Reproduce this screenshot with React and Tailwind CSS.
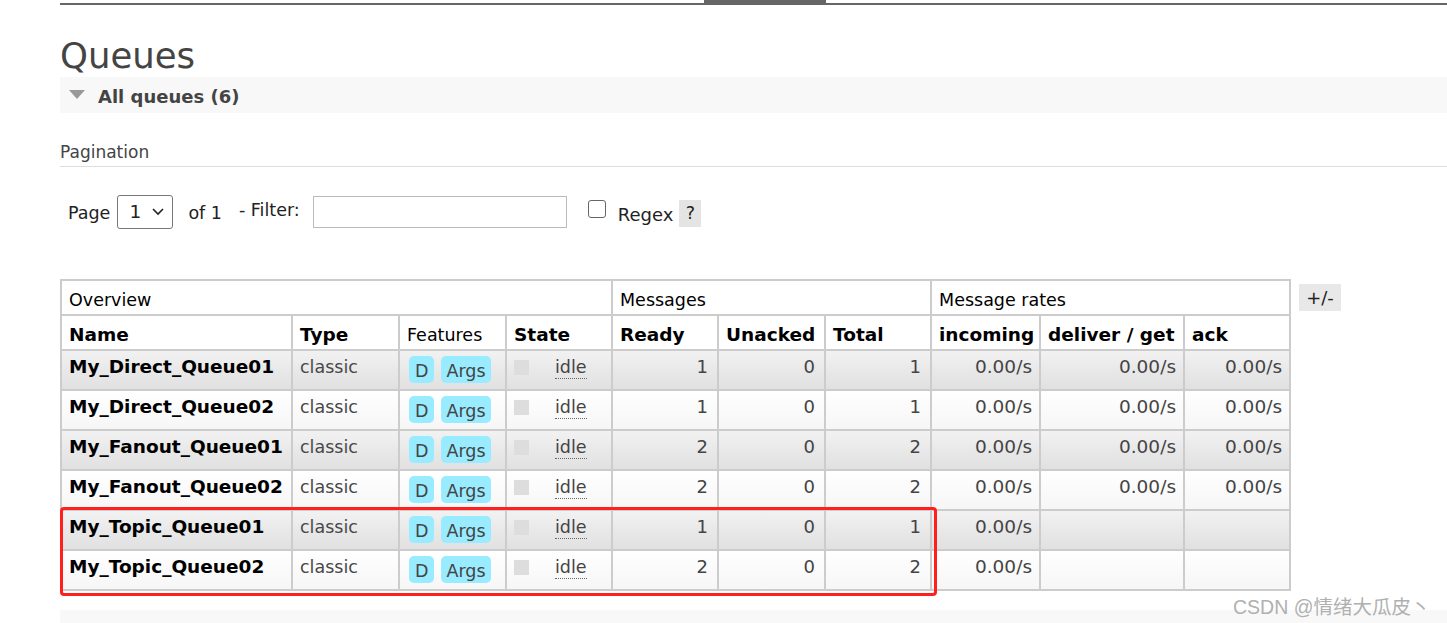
const queues = [
  { name: 'My_Direct_Queue01', ready: 1, unacked: 0, total: 1, rates: ['0.00/s', '0.00/s', '0.00/s'] },
  { name: 'My_Direct_Queue02', ready: 1, unacked: 0, total: 1, rates: ['0.00/s', '0.00/s', '0.00/s'] },
  { name: 'My_Fanout_Queue01', ready: 2, unacked: 0, total: 2, rates: ['0.00/s', '0.00/s', '0.00/s'] },
  { name: 'My_Fanout_Queue02', ready: 2, unacked: 0, total: 2, rates: ['0.00/s', '0.00/s', '0.00/s'] },
  { name: 'My_Topic_Queue01', ready: 1, unacked: 0, total: 1, rates: ['0.00/s', '', ''] },
  { name: 'My_Topic_Queue02', ready: 2, unacked: 0, total: 2, rates: ['0.00/s', '', ''] },
];

const td = 'border-2 border-[#ccc] px-[7px] align-top pt-[5px] h-[40px] whitespace-nowrap';
const thBase = 'border-2 border-[#ccc] px-[7px] text-left h-[35px] pt-[4px] text-black whitespace-nowrap';
const th = `${thBase} font-normal`;
const thBold = `${thBase} font-bold text-[18.5px]`;
const num = `${td} text-right pr-[9px] text-[#444] text-[18px]`;

function QueueRow({ q, index }) {
  const rowBg =
    index % 2 === 0
      ? 'bg-gradient-to-b from-[#f2f2f2] to-[#e0e0e0]'
      : 'bg-gradient-to-b from-white to-[#f6f6f6]';
  return (
    <tr className={rowBg}>
      <td className={`${td} font-bold text-black text-[18.5px]`}>{q.name}</td>
      <td className={`${td} text-[#484848]`}>classic</td>
      <td className={`${td} pl-[9px]`}>
        <div className="flex gap-[7px]">
          <span className="rounded-[5px] bg-[#99ebff] px-[6px] h-[27px] leading-[30px] text-[#444]">D</span>
          <span className="rounded-[5px] bg-[#99ebff] px-[5px] h-[27px] leading-[30px] text-[#444]">Args</span>
        </div>
      </td>
      <td className={td}>
        <div className="flex">
          <span className="mt-[4px] h-[15px] w-[15px] bg-[#ddd]" />
          <span className="ml-[26px] border-b border-dotted border-[#666] leading-[22px] text-[#444]">idle</span>
        </div>
      </td>
      <td className={num}>{q.ready}</td>
      <td className={num}>{q.unacked}</td>
      <td className={num}>{q.total}</td>
      {q.rates.map((r, i) => (
        <td key={i} className={`${td} text-right pr-[7px] text-[#444] text-[18.5px]`}>{r}</td>
      ))}
    </tr>
  );
}

export default function App() {
  return (
    <div
      className="relative h-[623px] w-[1447px] overflow-hidden bg-white text-[17.5px] text-[#444]"
      style={{ fontFamily: '"DejaVu Sans", Verdana, sans-serif' }}
    >
      {/* top nav line */}
      <div className="ml-[60px] flex h-[5px] items-start">
        <div className="relative mt-[3px] h-[2px] w-full bg-[#666]">
          <div className="absolute left-[644px] top-[-3px] h-[3px] w-[122px] bg-[#666]" />
        </div>
      </div>

      <div className="pl-[60px]">
        <h1 className="mt-[30px] h-[42px] text-[35.5px] leading-[42px] text-[#444]">Queues</h1>
        <div className="flex h-[36px] items-center bg-[#f8f8f8] pt-[3px]">
          <svg width="16" height="10" viewBox="0 0 16 10" className="ml-[9px] -mt-[3px]">
            <polygon points="0,0 16,0 8,9" fill="#999" />
          </svg>
          <span className="ml-[13px] text-[18px] font-bold text-[#444]">All queues (6)</span>
        </div>

        <div className="mt-[28px] border-b border-[#ddd] pb-[3px] text-[17px] leading-[22px] text-[#444]">
          Pagination
        </div>

        <div className="mt-[28px] flex items-center pl-[8px] text-[17.5px] text-[#222]">
          <span className="mt-[3px]">Page</span>
          <div className="ml-[7px] flex h-[34px] w-[56px] items-center rounded-[3px] border border-[#777] pl-[11px] text-[18.5px]">
            1
            <svg width="12" height="8" viewBox="0 0 12 8" className="ml-[11px]">
              <polyline points="1,1 6,6 11,1" fill="none" stroke="#222" strokeWidth="1.6" />
            </svg>
          </div>
          <span className="ml-[15px] mt-[2px]">of 1</span>
          <span className="ml-[17px] -mt-[4px]">- Filter:</span>
          <div className="ml-[13px] h-[32px] w-[254px] border border-[#bbb]" />
          <div className="ml-[21px] -mt-[6px] h-[18px] w-[18px] rounded-[3px] border border-[#666]" />
          <span className="ml-[12px] mt-[4px] text-[18px]">Regex</span>
          <span className="ml-[6px] mt-[3px] flex h-[27px] w-[22px] items-center justify-center bg-[#e4e4e4]">?</span>
        </div>

        <div className="mt-[50px] flex items-start">
          <div className="relative">
            <table className="w-[1231px] table-fixed border-collapse border-2 border-[#ccc] leading-[22px]">
              <colgroup>
                <col className="w-[231px]" />
                <col className="w-[107px]" />
                <col className="w-[107px]" />
                <col className="w-[106px]" />
                <col className="w-[106px]" />
                <col className="w-[107px]" />
                <col className="w-[106px]" />
                <col className="w-[109px]" />
                <col className="w-[144px]" />
                <col className="w-[106px]" />
              </colgroup>
              <thead>
                <tr>
                  <th colSpan={4} className={th}>Overview</th>
                  <th colSpan={3} className={th}>Messages</th>
                  <th colSpan={3} className={th}>Message rates</th>
                </tr>
                <tr>
                  <th className={thBold}>Name</th>
                  <th className={thBold}>Type</th>
                  <th className={th}>Features</th>
                  <th className={thBold}>State</th>
                  <th className={thBold}>Ready</th>
                  <th className={thBold}>Unacked</th>
                  <th className={thBold}>Total</th>
                  <th className={thBold}>incoming</th>
                  <th className={thBold}>deliver / get</th>
                  <th className={thBold}>ack</th>
                </tr>
              </thead>
              <tbody>
                {queues.map((q, i) => (
                  <QueueRow key={q.name} q={q} index={i} />
                ))}
              </tbody>
            </table>
            {/* highlight box */}
            <div className="pointer-events-none absolute left-0 top-[228px] h-[89px] w-[877px] rounded-[4px] border-[3px] border-[#ff1f1f]" />
          </div>
          <div className="ml-[8px] mt-[5px] flex h-[27px] w-[42px] items-center justify-center bg-[#e8e8e8] text-[18px] text-[#222]">
            +/-
          </div>
        </div>

        <div className="mt-[19px] h-[20px] bg-[#f8f8f8]" />
      </div>

      <div
        className="absolute left-[1233px] top-[593px] text-[19.5px] text-[#b0b0b0]"
        style={{ fontFamily: '"Liberation Sans", "Noto Sans CJK SC", sans-serif' }}
      >
        CSDN @情绪大瓜皮丶
      </div>
    </div>
  );
}
